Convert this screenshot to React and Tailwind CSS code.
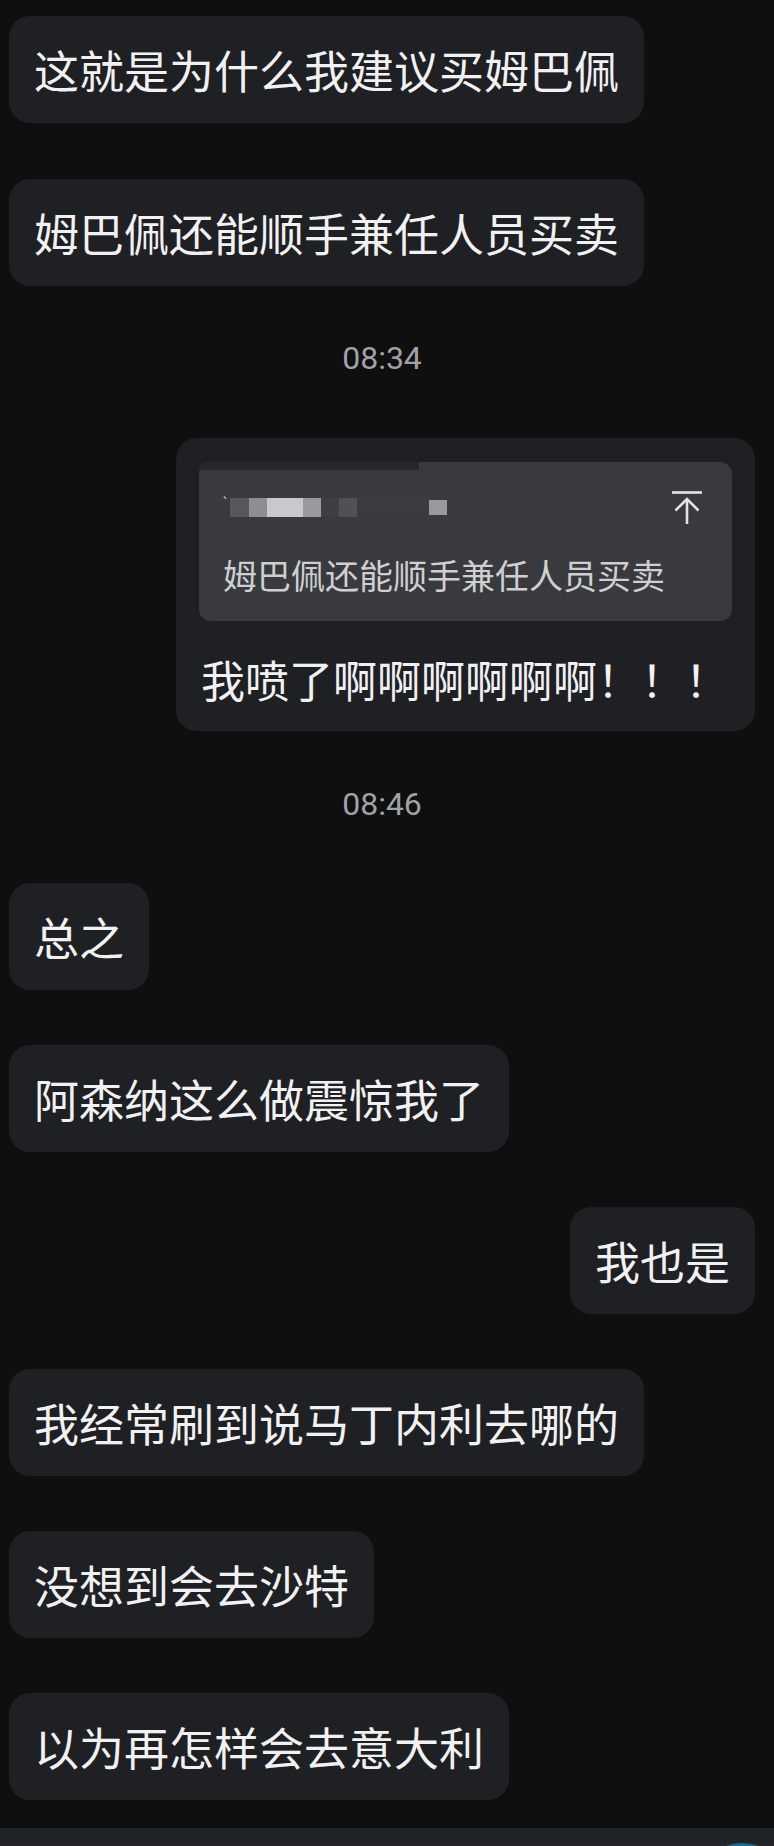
import React from "react";

const cjk = { fontFamily: '"Noto Sans CJK SC", "Noto Sans", sans-serif' };

// Plain chat bubble, left or right aligned
const Bubble = ({ text, right, className = "" }) => (
  <div className={`flex ${right ? "justify-end" : "justify-start"} ${className}`}>
    <div
      className="bg-[#1f2024] text-[#f1f1f2] rounded-[21px] px-[25px] py-[20px] text-[45px] leading-[67px] whitespace-nowrap"
      style={cjk}
    >
      {text}
    </div>
  </div>
);

const TimeLabel = ({ time, className = "" }) => (
  <div
    className={`text-center text-[32px] leading-[40px] text-[#a2a2a6] pr-[10px] ${className}`}
    style={{ fontFamily: "Roboto, sans-serif" }}
  >
    {time}
  </div>
);

const PinTop = () => (
  <svg width="30" height="33" viewBox="0 0 30 33" fill="none" stroke="#e4e4e6" strokeWidth="2.6">
    <line x1="0" y1="1.5" x2="30" y2="1.5" />
    <line x1="15" y1="8" x2="15" y2="33" />
    <polyline points="3.5,19.5 15,8 26.5,19.5" />
  </svg>
);

// the blurred sender name in the quote
const BlurredName = () => (
  <div className="flex items-center h-[33px]">
    <span className="text-[#d8d8da] text-[14px] leading-none mr-[3px] -mt-[10px]">`</span>
    <div className="w-[19px] h-[19px] bg-[#58585c]" />
    <div className="w-[18px] h-[19px] bg-[#8e8e92]" />
    <div className="w-[36px] h-[19px] bg-[#c9c9cc]" />
    <div className="w-[18px] h-[19px] bg-[#9a999d]" />
    <div className="w-[18px] h-[19px] bg-[#3e3f43]" />
    <div className="w-[18px] h-[19px] bg-[#505154]" />
    <div className="w-[72px] h-[19px] bg-[#3b3c40]" />
    <div className="w-[18px] h-[15px] bg-[#98999c]" />
  </div>
);

const QuoteReply = () => (
  <div className="flex justify-end mt-[60px] pr-[19px]">
    <div className="w-[579px] bg-[#1f2024] rounded-[21px] pt-[24px] pb-[18px]">
      <div className="relative mx-[23px] bg-[#393a3e] rounded-[12px] pt-[29px] pb-[22px] pl-[24px] pr-[30px]">
        {/* dark smudge over the top edge */}
        <div className="absolute left-0 top-0 w-[220px] h-[8px] bg-[#27282c] rounded-tl-[12px]" />
        <div className="flex items-center justify-between">
          <BlurredName />
          <PinTop />
        </div>
        <div className="mt-[27px] text-[34px] leading-[48px] text-[#cfcfd2] whitespace-nowrap" style={cjk}>
          姆巴佩还能顺手兼任人员买卖
        </div>
      </div>
      <div className="mt-[25px] pl-[25px] text-[44px] leading-[67px] text-[#f1f1f2] whitespace-nowrap" style={cjk}>
        我喷了啊啊啊啊啊啊！！！
      </div>
    </div>
  </div>
);

export default function App() {
  return (
    <div className="w-[774px] h-[1846px] bg-[#0f0f10] overflow-hidden flex flex-col">
      <div className="pl-[9px] pt-[16px]">
        <Bubble text="这就是为什么我建议买姆巴佩" />
        <Bubble text="姆巴佩还能顺手兼任人员买卖" className="mt-[56px]" />
      </div>
      <TimeLabel time="08:34" className="mt-[52px]" />
      <QuoteReply />
      <TimeLabel time="08:46" className="mt-[53px]" />
      <div className="pl-[9px] pr-[19px] mt-[59px] flex flex-col gap-[55px]">
        <Bubble text="总之" />
        <Bubble text="阿森纳这么做震惊我了" />
        <Bubble text="我也是" right />
        <Bubble text="我经常刷到说马丁内利去哪的" />
        <Bubble text="没想到会去沙特" />
        <Bubble text="以为再怎样会去意大利" />
      </div>
      {/* input bar peeking at the bottom */}
      <div className="mt-[28px] flex-1 bg-[#1f2226] relative overflow-hidden">
        <div className="h-[15px]" />
        <div className="h-full bg-[#25272b]" />
        <div className="absolute left-[697px] top-[15px] w-[90px] h-[90px] rounded-full bg-[#1a6a8e]" />
      </div>
    </div>
  );
}
